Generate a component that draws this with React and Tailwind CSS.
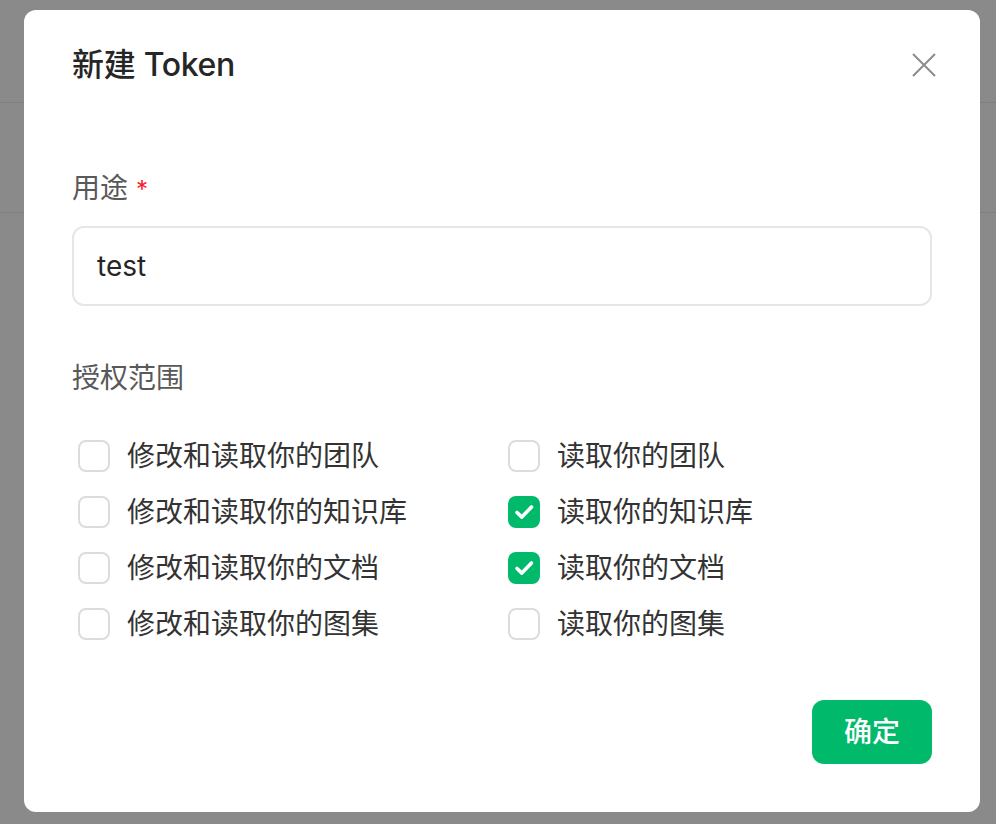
import { useState } from 'react';

const SCOPES = [
  { id: 'team-rw', label: '修改和读取你的团队' },
  { id: 'team-r', label: '读取你的团队' },
  { id: 'repo-rw', label: '修改和读取你的知识库' },
  { id: 'repo-r', label: '读取你的知识库' },
  { id: 'doc-rw', label: '修改和读取你的文档' },
  { id: 'doc-r', label: '读取你的文档' },
  { id: 'album-rw', label: '修改和读取你的图集' },
  { id: 'album-r', label: '读取你的图集' },
];

const FONT = 'font-["Inter","Noto_Sans_CJK_SC",sans-serif]';

function Checkbox({ checked, label, onToggle }) {
  return (
    <label className="flex items-center h-14 cursor-pointer select-none" onClick={onToggle}>
      <span
        className={`ml-[6px] w-8 h-8 rounded-lg shrink-0 ${
          checked ? 'bg-[#00b96b]' : 'border-2 border-[#dcdcdc] bg-white'
        }`}
      >
        {checked && (
          <svg className="w-8 h-8" viewBox="0 0 32 32" fill="none">
            <path d="M9 16.5l4.8 4.6L23.5 11" stroke="white" strokeWidth="3.6" strokeLinecap="round" strokeLinejoin="round" />
          </svg>
        )}
      </span>
      <span className="ml-[17px] text-[28px] leading-10 text-[#333333]">{label}</span>
    </label>
  );
}

export default function App() {
  const [purpose, setPurpose] = useState('test');
  const [checked, setChecked] = useState({ 'repo-r': true, 'doc-r': true });

  const toggle = (id) => setChecked((c) => ({ ...c, [id]: !c[id] }));

  return (
    <div className={`relative h-screen overflow-hidden bg-[#8a8a8a] ${FONT}`}>
      {/* Underlying page, dimmed */}
      <div className="h-[103px] border-b border-[#7f7f7f]" />
      <div className="h-[110px] border-b border-[#7f7f7f]" />

      {/* Dialog */}
      <div className="absolute left-6 top-[10px] w-[956px] rounded-xl bg-white px-12 pt-[33px] pb-[48px]">
        <h2 className="text-[32px] leading-[44px] font-medium tracking-[-0.3px] text-[#262626]">新建 Token</h2>
        <button className="absolute top-[43px] right-[44px] w-6 h-6 text-[#8c8c8c]">
          <svg width="24" height="24" viewBox="0 0 24 24" fill="none">
            <path d="M1 1l22 22M23 1L1 23" stroke="currentColor" strokeWidth="2" />
          </svg>
        </button>

        <div className="mt-[81px] text-[28px] leading-10 text-[#595959]">
          用途 <span className="text-[#f5222d] text-[24px]">*</span>
        </div>
        <input
          value={purpose}
          onChange={(e) => setPurpose(e.target.value)}
          className="mt-4 w-full h-20 rounded-xl border-2 border-[#e6e6e6] px-[23px] text-[28px] text-[#262626] outline-none"
        />

        <div className="mt-[52px] text-[28px] leading-10 text-[#595959]">授权范围</div>

        <div className="mt-[30px] grid grid-cols-2">
          {SCOPES.map((s) => (
            <Checkbox key={s.id} label={s.label} checked={!!checked[s.id]} onToggle={() => toggle(s.id)} />
          ))}
        </div>

        <div className="mt-12 flex justify-end">
          <button className="w-[120px] h-16 rounded-xl bg-[#00b96b] text-white text-[28px] font-medium">确定</button>
        </div>
      </div>
    </div>
  );
}
